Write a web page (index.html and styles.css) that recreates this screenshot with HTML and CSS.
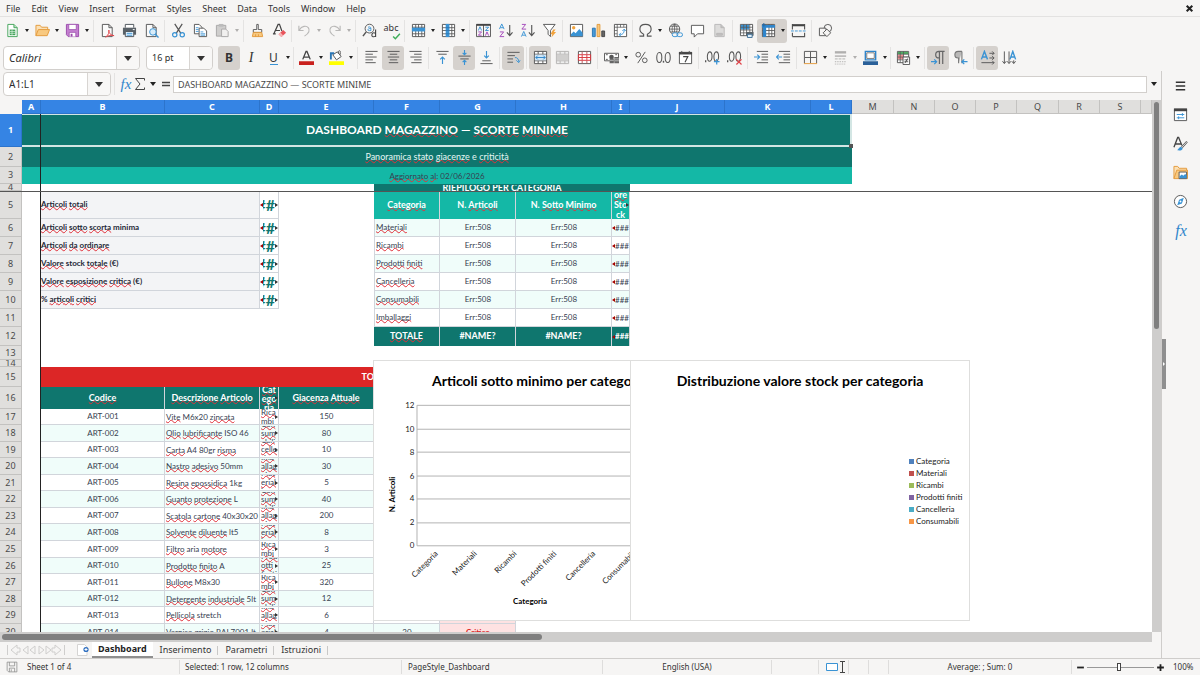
FILE: index.html
```html
<!DOCTYPE html>
<html lang="en">
<head>
<meta charset="utf-8">
<title>Dashboard</title>
<link rel="stylesheet" href="styles.css">
</head>
<body>
<header class="menubar">
  <nav class="menus">
    <a href="#">File</a><a href="#">Edit</a><a href="#">View</a><a href="#">Insert</a><a href="#">Format</a><a href="#">Styles</a><a href="#">Sheet</a><a href="#">Data</a><a href="#">Tools</a><a href="#">Window</a><a href="#">Help</a>
  </nav>
  <button class="close" aria-label="Close document"><svg viewBox="0 0 8 8"><path d="M1.5 1.5l5 5M6.5 1.5l-5 5" stroke="#222" stroke-width="1.8"/></svg></button>
</header>

<div class="toolbar" role="toolbar" aria-label="Standard">
  <button class="tb drop" aria-label="New"><svg viewBox="0 0 16 16"><path d="M3 1.5h6.500l3.500 3.500v9.500H3z" fill="#fff" stroke="#43a35a"/><path d="M9.500 1.500V5H13" fill="#b7e3c0" stroke="#43a35a"/><path d="M5 7h6v6H5z" fill="#43a35a"/><path d="M5 9h6M5 11h6M7.500 7v6" stroke="#e5f6e8" stroke-width=".7"/></svg><i></i></button>
  <button class="tb drop" aria-label="Open"><svg viewBox="0 0 16 16"><path d="M1 13.500V2.500h4.500l1.500 2h6.500V7" fill="#fbe0b5" stroke="#e39a3b"/><path d="M1 13.500L3.500 7h12l-2.500 6.500z" fill="#f8c980" stroke="#e39a3b"/></svg><i></i></button>
  <button class="tb drop" aria-label="Save"><svg viewBox="0 0 16 16"><path d="M1.500 1.500h13v13H3.500l-2-2z" fill="#c47fd0" stroke="#9a4bab"/><path d="M4 1.500h8v5.500H4z" fill="#fff" stroke="#9a4bab" stroke-width=".8"/><path d="M4.500 14.500v-4.500h7v4.500" fill="#fff" stroke="#9a4bab" stroke-width=".8"/><path d="M6 11.500h2v3H6z" fill="#9a4bab"/></svg><i></i></button>
  <span class="sep"></span>
  <button class="tb" aria-label="Export PDF"><svg viewBox="0 0 16 16"><path d="M2.500 1.500h7l3.500 3.500v9.500H2.500z" fill="#fafafa" stroke="#555"/><path d="M9.500 1.500V5H13" fill="none" stroke="#555"/><path d="M6 15c3-2 4-5 3.500-7.500-.8 3 2 5.500 5.500 6-3-.8-6-.2-9 1.500z" fill="#fff" stroke="#e0444a"/></svg></button>
  <button class="tb" aria-label="Print"><svg viewBox="0 0 16 16"><path d="M3.500 5V1.500h9V5" fill="#fff" stroke="#4a5157"/><path d="M1 5h14v7.500H1z" fill="#5a6268"/><path d="M3.500 9h9v5.500h-9z" fill="#eaf4fb" stroke="#4a5157"/><path d="M5 11h6M5 13h6" stroke="#3a93d4"/><path d="M11.500 7h2" stroke="#fff"/></svg></button>
  <button class="tb" aria-label="Print preview"><svg viewBox="0 0 16 16"><path d="M2.500 1.500h7l3.500 3.500v9.500H2.500z" fill="#fafafa" stroke="#555"/><path d="M9.500 1.500V5H13" fill="none" stroke="#555"/><circle cx="9.500" cy="9.500" r="3.500" fill="#d8ecf9" stroke="#3a93d4"/><path d="M12 12l3.500 3.500" stroke="#3a93d4" stroke-width="1.500"/></svg></button>
  <span class="sep"></span>
  <button class="tb" aria-label="Cut"><svg viewBox="0 0 16 16" fill="none"><path d="M4 1l6.500 10M12 1L5.500 11" stroke="#555" stroke-width="1.300"/><circle cx="4" cy="12.500" r="2.300" stroke="#3a93d4" stroke-width="1.300"/><circle cx="12" cy="12.500" r="2.300" stroke="#3a93d4" stroke-width="1.300"/></svg></button>
  <button class="tb" aria-label="Copy"><svg viewBox="0 0 16 16"><path d="M1.500 1.500h5l3 3v7h-8z" fill="#fff" stroke="#555"/><path d="M6.500 5.500h5l3 3v6h-8z" fill="#fff" stroke="#555"/><path d="M3 5h3M3 7h3M3 9h3M8 9.500h3M8 11.500h5M8 13h5" stroke="#3a93d4" stroke-width=".9"/></svg></button>
  <button class="tb drop off" aria-label="Paste"><svg viewBox="0 0 16 16"><path d="M1.500 2.500h10v11.500h-10z" fill="#cfcecd" stroke="#a9a8a7"/><path d="M4 1h5v3H4z" fill="#bbb"/><path d="M7 6.500h4.500l2.500 2.500v5.500H7z" fill="#f1f0ef" stroke="#a9a8a7"/></svg><i></i></button>
  <span class="sep"></span>
  <button class="tb" aria-label="Clone formatting"><svg viewBox="0 0 16 16"><path d="M7.200 1.500h1.600V7h3.700v3h-9V7h3.700z" fill="#fff" stroke="#555"/><path d="M3.500 10h9l1 4.500h-11z" fill="#f8c980" stroke="#e39a3b"/><path d="M6 12v2.500M9 12v2.500" stroke="#e39a3b"/></svg></button>
  <button class="tb" aria-label="Clear formatting"><svg viewBox="0 0 16 16"><path d="M2 11.500L6.500 1.500h1.500l2.500 7M3.500 8h5M1 11.500h3" fill="none" stroke="#444" stroke-width="1.300"/><path d="M7 12l5-4.500 3 3-5 4.500z" fill="#e8545b"/><path d="M7 12l2-1.800 3 3L10 15z" fill="#f6b2b5"/></svg></button>
  <span class="sep slim"></span>
  <button class="tb drop off" aria-label="Undo"><svg viewBox="0 0 16 16" fill="none" stroke="#b9b8b7" stroke-width="1.200"><path d="M2 3v5h5M2.500 7.500C5 3 10 2.500 12 5s1 6-4 9"/></svg><i></i></button>
  <button class="tb drop off" aria-label="Redo"><svg viewBox="0 0 16 16" fill="none" stroke="#b9b8b7" stroke-width="1.200"><path d="M14 3v5H9M13.500 7.500C11 3 6 2.500 4 5s-1 6 4 9"/></svg><i></i></button>
  <span class="sep"></span>
  <button class="tb" aria-label="Find and replace"><svg viewBox="0 0 16 16" fill="none"><circle cx="8" cy="6" r="4.700" stroke="#555"/><path d="M4.500 9.500L1 14" stroke="#555" stroke-width="1.600"/><path d="M6.500 4.500c3-1 3 .5 3 3.500-3 .5-3.500-.2-3-1.200s2-1 3-.8" stroke="#3a93d4"/><path d="M14.500 7v8M14.500 11c-3-1.500-4 .2-4 2s2 2.200 4 1" stroke="#444" stroke-width="1.200"/></svg></button>
  <button class="tb" aria-label="Spelling"><span class="abc">abc</span><svg class="tick" viewBox="0 0 8 6"><path d="M1 3l2 2 4-4.500" fill="none" stroke="#3fae5a" stroke-width="1.300"/></svg></button>
  <span class="sep"></span>
  <button class="tb drop" aria-label="Row"><svg viewBox="0 0 16 16"><path d="M1.500 1.500h13v13h-13z" fill="#fff" stroke="#555"/><path d="M1.500 4.500h13M1.500 11.500h13M5 1.500v13M8 1.500v13M11.500 1.500v13" stroke="#555" stroke-width=".9"/><path d="M1 5h14v4H1z" fill="#3a93d4"/></svg><i></i></button>
  <button class="tb drop" aria-label="Column"><svg viewBox="0 0 16 16"><path d="M1.500 1.500h13v13h-13z" fill="#fff" stroke="#555"/><path d="M1.500 5h13M1.500 8h13M1.500 11.500h13M11.500 1.500v13" stroke="#555" stroke-width=".9"/><path d="M5 1h4v14H5z" fill="#3a93d4"/><path d="M5 5h4M5 8h4M5 11.500h4" stroke="#2a6ca8" stroke-width=".7"/></svg><i></i></button>
  <span class="sep"></span>
  <button class="tb" aria-label="Sort"><svg viewBox="0 0 16 16" fill="none"><path d="M.5 1.500h15v13H.5zM8 2v13" stroke="#555"/><path d="M.5 2h15" stroke="#444" stroke-width="2"/><path d="M2.500 8l1.700-4L6 8M10 4.500h3.500L10 8h3.500" stroke="#3a93d4"/><path d="M2.500 9.500H6L2.500 13H6M10 13.500l1.700-4 1.800 4" stroke="#a347ba"/></svg></button>
  <button class="tb" aria-label="Sort ascending"><svg viewBox="0 0 16 16" fill="none"><path d="M1.500 6.500L4 1l2.500 5.500M2.500 5h3" stroke="#3a93d4"/><path d="M2 9.500h4L2 14.500h4.500" stroke="#a347ba"/><path d="M12.500 2v11M9.500 10l3 3.500 3-3.500" stroke="#555" stroke-width="1.200"/></svg></button>
  <button class="tb" aria-label="Sort descending"><svg viewBox="0 0 16 16" fill="none"><path d="M2 1.500h4L2 6.500h4.500" stroke="#a347ba"/><path d="M1.500 14.500L4 9l2.500 5.500M2.500 13h3" stroke="#3a93d4"/><path d="M12.500 2v11M9.500 10l3 3.500 3-3.500" stroke="#555" stroke-width="1.200"/></svg></button>
  <button class="tb" aria-label="AutoFilter"><svg viewBox="0 0 16 16"><path d="M1.500 1.500h12.500L9 8v6.500L6.500 12V8z" fill="#fff" stroke="#555"/><path d="M12 7l-3 5h2l-1 3.500 5-6h-2.500l2-2.500z" fill="#f2a33c"/></svg></button>
  <span class="sep"></span>
  <button class="tb" aria-label="Insert image"><svg viewBox="0 0 16 16"><path d="M1.500 1.500h13v13h-13z" fill="#fff" stroke="#555"/><circle cx="5" cy="5" r="1.800" fill="#f2a33c"/><path d="M2 14v-2l3-3 2 2 4-4.500 3.500 4V14z" fill="#3a93d4"/></svg></button>
  <button class="tb" aria-label="Insert chart"><svg viewBox="0 0 16 16"><path d="M1.500 5.500h3v9h-3z" fill="#4a9bd8" stroke="#2a76b5"/><path d="M6.500 1.500h3v13h-3z" fill="#f8c980" stroke="#e39a3b"/><path d="M11.500 8.500h3v6h-3z" fill="#666" stroke="#444"/></svg></button>
  <button class="tb" aria-label="Pivot table"><svg viewBox="0 0 16 16"><path d="M1.500 1.500h13v13h-13z" fill="#fff" stroke="#555"/><path d="M1.500 4.500h13M4.500 1.500v13M8 1.500v3M11.500 1.500v3M1.500 8h3M1.500 11.500h3" stroke="#555" stroke-width=".8"/><path d="M7 12.500c3 0 5-1.500 5-5.500M6.500 12.500l2-2M6.500 12.500l2 1.500M12 6.500l-2 2M12 6.500l1.500 2" fill="none" stroke="#3a93d4"/></svg></button>
  <span class="sep slim"></span>
  <button class="tb drop" aria-label="Special character"><svg viewBox="0 0 16 16" fill="none" stroke="#555" stroke-width="1.200"><path d="M1.500 14H6v-2C3 10.500 2 8.500 2 6.500 2 3.500 4.500 1.500 8 1.500s6 2 6 5c0 2-1 4-4 5.500v2h4.500"/></svg><i></i></button>
  <button class="tb" aria-label="Hyperlink"><svg viewBox="0 0 16 16" fill="none"><circle cx="7" cy="6.500" r="5.500" stroke="#555"/><path d="M1.500 6.500h11M7 1v11M7 1C3.500 4 3.500 9 7 12M7 1c3.500 3 3.500 8 0 11M2.500 3.500h9M2.500 9.500h9" stroke="#555" stroke-width=".8"/><rect x="4.500" y="10.500" width="6" height="4" rx="2" fill="#f6f5f4" stroke="#3a93d4"/><rect x="9.500" y="10.500" width="6" height="4" rx="2" stroke="#3a93d4"/></svg></button>
  <button class="tb" aria-label="Comment"><svg viewBox="0 0 16 16"><path d="M1.500 2.500h13v9H8L4.500 15v-3.500h-3z" fill="#fff" stroke="#555"/></svg></button>
  <button class="tb off" aria-label="Headers and footers"><svg viewBox="0 0 16 16"><path d="M3 1.500h6.500L13 5v9.500H3z" fill="#dddcdb" stroke="#b9b8b7"/><path d="M9.500 1.500V5H13M5 11h6v2H5z" fill="#c3c2c1" stroke="#b9b8b7"/></svg></button>
  <span class="sep"></span>
  <button class="tb" aria-label="Print area"><svg viewBox="0 0 16 16"><path d="M1.500 1.500h13v12h-13z" fill="#fff" stroke="#555"/><path d="M2 2h9v5H2z" fill="#3a93d4"/><path d="M1.500 4.500h13M1.500 7.500h13M1.500 10.500h13M5 1.500v12M8 1.500v12M11.500 1.500v12" stroke="#555" stroke-width=".8"/><path d="M7.500 9.500h8v4h-8z" fill="#5a6268"/><path d="M9 12h5v3.500H9z" fill="#dceefa" stroke="#3f6f96"/></svg></button>
  <button class="tb drop on" aria-label="Freeze panes"><svg viewBox="0 0 16 16"><path d="M1.500 1.500h13v13h-13z" fill="#fff" stroke="#555"/><path d="M1.500 8h13M1.500 11.500h13M8.500 1.500v13M11.500 1.500v13" stroke="#555" stroke-width=".9"/><path d="M1 2h14v3H1zM2 2h3.500v13H2z" fill="#2f85cb"/><path d="M3 0v4M1 2h4" stroke="#2467a3"/></svg><i></i></button>
  <button class="tb" aria-label="Split window"><svg viewBox="0 0 16 16"><path d="M2 2h12M1.500 14.500h13v-4M1.500 14.500v-4M1.500 1v6M14.500 1v6" fill="none" stroke="#555" stroke-width="1.200"/><path d="M1.500 2.500h13" stroke="#444" stroke-width="2"/><path d="M0 8.500h16" stroke="#3a93d4" stroke-dasharray="3 1.200"/></svg></button>
  <span class="sep"></span>
  <button class="tb" aria-label="Draw functions"><svg viewBox="0 0 16 16" fill="#f6f5f4" stroke="#555"><circle cx="10.500" cy="5.500" r="4"/><path d="M1.500 5.500h7v8h-7z"/><path d="M9.500 6.500l4 4-4 4-4-4z"/></svg></button>
</div>

<div class="toolbar" role="toolbar" aria-label="Formatting">
  <span class="combo font"><select aria-label="Font name"><option>Calibri</option></select></span>
  <span class="combo size"><select aria-label="Font size"><option>16 pt</option></select></span>
  <button class="tb on bold" aria-label="Bold">B</button>
  <button class="tb ital" aria-label="Italic">I</button>
  <button class="tb drop" aria-label="Underline"><span class="und">U</span><i></i></button>
  <span class="sep slim"></span>
  <button class="tb drop" aria-label="Font color"><svg viewBox="0 0 16 16"><path d="M4 10L7.500 1.500h1L12 10M5.200 7.500h5.600" fill="none" stroke="#444" stroke-width="1.400"/><path d="M0 12h16v4H0z" fill="#c9211e"/></svg><i></i></button>
  <button class="tb drop" aria-label="Highlighting"><svg viewBox="0 0 16 16"><path d="M4 5l5-3 4 5-5 3.500z" fill="#fff" stroke="#555"/><path d="M10 4V1.500c1-1.500 2.500-.5 2 1L12 5" fill="none" stroke="#555"/><path d="M2 10V3.500h3.500" fill="none" stroke="#2a76b5" stroke-width="2"/><path d="M0 12h16v4H0z" fill="#ff0"/></svg><i></i></button>
  <span class="sep"></span>
  <button class="tb" aria-label="Align left"><svg viewBox="0 0 16 16"><path d="M1.500 1.500h13M1.500 4.500h8M1.500 7.500h12M1.500 10.500h8M1.500 13.500h11" stroke="#555"/></svg></button>
  <button class="tb on" aria-label="Center"><svg viewBox="0 0 16 16"><path d="M1.500 1.500h13M4 4.500h8M2 7.500h12M4 10.500h8M3 13.500h10" stroke="#555"/></svg></button>
  <button class="tb" aria-label="Align right"><svg viewBox="0 0 16 16"><path d="M1.500 1.500h13M6.500 4.500h8M2.500 7.500h12M6.500 10.500h8M3.500 13.500h11" stroke="#555"/></svg></button>
  <span class="sep"></span>
  <button class="tb" aria-label="Align top"><svg viewBox="0 0 16 16" fill="none"><path d="M1.500 1.500h13M3.500 4.500h9" stroke="#555"/><path d="M8 15V7.500M5.500 10L8 7.500l2.500 2.500" stroke="#3a93d4" stroke-width="1.200"/></svg></button>
  <button class="tb on" aria-label="Center vertically"><svg viewBox="0 0 16 16" fill="none"><path d="M1.500 6.500h13M3.500 9.500h9" stroke="#555"/><path d="M8 0v5M6 3l2 2 2-2M8 16v-5M6 13l2-2 2 2" stroke="#3a93d4" stroke-width="1.200"/></svg></button>
  <button class="tb" aria-label="Align bottom"><svg viewBox="0 0 16 16" fill="none"><path d="M1.500 14.500h13M3.500 11.500h9" stroke="#555"/><path d="M8 1v7.500M5.500 6L8 8.500 10.500 6" stroke="#3a93d4" stroke-width="1.200"/></svg></button>
  <span class="sep"></span>
  <button class="tb on" aria-label="Wrap text"><svg viewBox="0 0 16 16" fill="none"><path d="M1.500 2.500h13M1.500 6h8M1.500 9.500h6M1.500 13h6" stroke="#555"/><path d="M9.500 8c3 0 4 2 4 4.500M11 11l2.500 2.500L15 11" stroke="#3a93d4"/></svg></button>
  <span class="sep"></span>
  <button class="tb on" aria-label="Merge cells"><svg viewBox="0 0 16 16"><path d="M1.500 1.500h13v13h-13z" fill="#fff" stroke="#555"/><path d="M1.500 4.500h13M1.500 11.500h13M5.500 1.500v3M10.500 1.500v3M5.500 11.500v3M10.500 11.500v3" stroke="#555"/><path d="M2 5h12v6H2z" fill="#cfe6f7"/><path d="M3 8h10M5 6L3 8l2 2M11 6l2 2-2 2" fill="none" stroke="#2f85cb"/></svg></button>
  <button class="tb off" aria-label="Unmerge cells"><svg viewBox="0 0 16 16"><path d="M1.500 1.500h13v13h-13z" fill="#eee" stroke="#b5b4b3"/><path d="M1.500 4.500h13M1.500 11.500h13M5.500 1.500v3M10.500 1.500v3M5.500 11.500v3M10.500 11.500v3" stroke="#b5b4b3"/><path d="M2 5h12v6H2z" fill="#d0cfce"/></svg></button>
  <button class="tb" aria-label="Delete cells"><svg viewBox="0 0 16 16"><path d="M1.500 1.500h13v13h-13z" fill="#fff" stroke="#555"/><path d="M1.500 5h13v6h-13zM1.500 8h13M5.500 5v6M10.500 5v6" fill="none" stroke="#d9363e"/><path d="M5.500 1.500v3M10.500 1.500v3M5.500 11.500v3M10.500 11.500v3" stroke="#b5555a"/></svg></button>
  <span class="sep"></span>
  <button class="tb drop" aria-label="Currency"><svg viewBox="0 0 16 16"><path d="M.5 3.500h15v8H.5z" fill="#fff" stroke="#555"/><path d="M2 5h2M12 5h2M2 10h2" stroke="#555"/><circle cx="8" cy="7.500" r="2.500" fill="#555"/><path d="M6 9h4.500v5H6zM11 7.500h5v6.500h-5z" fill="#666"/><path d="M6 11h4.500M11 9.500h5M11 11.500h5" stroke="#ddd" stroke-width=".7"/></svg><i></i></button>
  <button class="tb" aria-label="Percent"><svg viewBox="0 0 16 16" fill="none" stroke="#555"><circle cx="4.500" cy="5" r="2.500"/><circle cx="11.500" cy="11" r="2.500"/><path d="M12 2L4 14"/></svg></button>
  <button class="tb" aria-label="Number"><svg viewBox="0 0 16 16" fill="none" stroke="#555" stroke-width="1.100"><ellipse cx="3.500" cy="8" rx="2.700" ry="5.300"/><ellipse cx="12.500" cy="8" rx="2.700" ry="5.300"/><path d="M8 11.500v2" stroke-width="1.500"/></svg></button>
  <button class="tb" aria-label="Date"><svg viewBox="0 0 16 16"><path d="M1.500 2.500h13v12h-13z" fill="#fff" stroke="#555"/><path d="M1 3.500h14" stroke="#444" stroke-width="2.500"/><path d="M4 1v3M12 1v3" stroke="#555"/><path d="M5.500 7h5L7.500 13" fill="none" stroke="#444" stroke-width="1.200"/></svg></button>
  <span class="sep"></span>
  <button class="tb" aria-label="Add decimal place"><svg viewBox="0 0 16 16" fill="none" stroke="#555" stroke-width="1.100"><ellipse cx="5" cy="7" rx="2.500" ry="5"/><ellipse cx="12" cy="7" rx="2.500" ry="5"/><path d="M.7 11v2" stroke-width="1.400"/><path d="M12.500 9.500v6M9.500 12.500h6" stroke="#3a93d4" stroke-width="1.300"/></svg></button>
  <button class="tb" aria-label="Delete decimal place"><svg viewBox="0 0 16 16" fill="none" stroke="#555" stroke-width="1.100"><ellipse cx="5" cy="7" rx="2.500" ry="5"/><ellipse cx="12" cy="7" rx="2.500" ry="5"/><path d="M.7 11v2" stroke-width="1.400"/><path d="M10 10l5.500 5.500M15.500 10L10 15.500" stroke="#e0444a" stroke-width="1.300"/></svg></button>
  <span class="sep"></span>
  <button class="tb" aria-label="Increase indent"><svg viewBox="0 0 16 16" fill="none"><path d="M3 1.500h12M8 4.500h7M8 7.500h7M8 10.500h7M3 13.500h12" stroke="#555"/><path d="M0 7.500h6M3.500 5L6 7.500 3.500 10" stroke="#3a93d4" stroke-width="1.200"/></svg></button>
  <button class="tb" aria-label="Decrease indent"><svg viewBox="0 0 16 16" fill="none"><path d="M3 1.500h12M8 4.500h7M8 7.500h7M8 10.500h7M3 13.500h12" stroke="#555"/><path d="M6.500 7.500h-6M3 5L.5 7.500 3 10" stroke="#3a93d4" stroke-width="1.200"/></svg></button>
  <span class="sep"></span>
  <button class="tb drop" aria-label="Borders"><svg viewBox="0 0 16 16" fill="none"><path d="M1.500 14V1.500h13V14M8 2v12M2 8h12" stroke="#555"/><path d="M1 14.500h14" stroke="#e39a3b"/></svg><i></i></button>
  <button class="tb drop off" aria-label="Border style"><svg viewBox="0 0 16 16" stroke="#b0afae"><path d="M2 2.500h12" stroke-width="2.500"/><path d="M2 6.500h12" stroke-width="1.500"/><path d="M2 9.500h12" stroke-dasharray="3 1"/><path d="M2 12.500h12" stroke-dasharray="1.500 1"/><path d="M2 15h12" stroke-dasharray="1 1"/></svg><i></i></button>
  <button class="tb drop" aria-label="Border color"><svg viewBox="0 0 16 16"><path d="M2.500 1.500h11v9h-11z" fill="#fff" stroke="#2f85cb" stroke-width="1.500"/><path d="M4 3h8v6H4z" fill="none" stroke="#777"/><path d="M0 12h16v4H0z" fill="#2a6099"/></svg><i></i></button>
  <span class="sep slim"></span>
  <button class="tb drop" aria-label="Conditional formatting"><svg viewBox="0 0 16 16"><path d="M1.500 1.500h12v12h-12z" fill="#fff" stroke="#555"/><path d="M2 2h11v2.500H2z" fill="#4fae63"/><path d="M2 5h6v5H2z" fill="#ef8d91"/><path d="M1.500 4.500h12M1.500 7.500h12M1.500 10.500h12M4.500 1.500v12M8 1.500v12" stroke="#555" stroke-width=".8"/><path d="M7.500 7.500h7v8h-7z" fill="#fff" stroke="#555"/><path d="M9 10.500h4M9 12.500h4M12.500 9l-3 5" stroke="#444" stroke-width=".9"/></svg><i></i></button>
  <span class="sep"></span>
  <button class="tb on" aria-label="Left to right"><svg viewBox="0 0 16 16"><path d="M14.500 1.500H8.500a3.500 3.500 0 000 7H9V15M9 1.500V15M12.500 1.500V15" fill="none" stroke="#666" stroke-width="1.300"/><path d="M0 12.500h6M3.500 10L6 12.500 3.500 15" fill="none" stroke="#3a93d4" stroke-width="1.300"/></svg></button>
  <button class="tb" aria-label="Right to left"><svg viewBox="0 0 16 16"><path d="M9.500 1.500h-4a3.500 3.500 0 000 7H6V14M9.500 1.500V14" fill="#b9b8b7" stroke="#777" stroke-width="1.200"/><path d="M15.500 12.500h-6M12 10l-2.500 2.500L12 15" fill="none" stroke="#3a93d4" stroke-width="1.300"/></svg></button>
  <span class="sep"></span>
  <button class="tb on" aria-label="Horizontal text"><svg viewBox="0 0 16 16" fill="none"><path d="M1.500 10L4.700 1.500 8 10M2.700 7.500h4" stroke="#3a93d4" stroke-width="1.500"/><path d="M10 3.500h5M10 8.500h5M1.500 13.500h13.500M13 1.500l2 2-2 2M13 6.500l2 2-2 2M13 11.500l2 2-2 2" stroke="#555"/></svg></button>
  <button class="tb" aria-label="Vertical text"><svg viewBox="0 0 16 16" fill="none"><path d="M8.500 10L11.500 1.500l3 8.500M9.500 7.500h4" stroke="#3a93d4" stroke-width="1.500"/><path d="M2.500 1.500V14M7.500 1.500V14M12.500 11v3M.5 12l2 2.500 2-2.500M5.500 12l2 2.500 2-2.500M10.500 12l2 2.500 2-2.500" stroke="#555"/></svg></button>
</div>

<main class="workspace">
  <div class="document">
    <div class="formulabar">
      <span class="combo name"><select aria-label="Name box"><option>A1:L1</option></select></span>
      <span class="sep"></span>
      <button class="fx" aria-label="Function wizard">fx</button>
      <button class="sigma" aria-label="Select function"><svg viewBox="0 0 12 14"><path d="M10.500 3.500v-2h-9L6 7l-4.500 5.500h9v-2" fill="none" stroke="#444"/></svg><i></i></button>
      <button class="equals" aria-label="Formula"><svg viewBox="0 0 10 8"><path d="M1 2.500h8M1 5.500h8" stroke="#444" stroke-width="1.500"/></svg></button>
      <input type="text" aria-label="Input line" value="DASHBOARD MAGAZZINO — SCORTE MINIME">
      <button class="expand" aria-label="Expand formula bar"><i></i></button>
    </div>

    <div class="sheetarea">
      <div class="viewport">
        <table class="grid">
          <colgroup>
            <col class="w22"><col class="w19"><col class="w124"><col class="w95"><col class="w19"><col class="w95"><col class="w66"><col class="w76"><col class="w96"><col class="w18"><col class="w95"><col class="w86"><col class="w41"><col class="w42"><col class="w41"><col class="w41"><col class="w41"><col class="w42"><col class="w41"><col class="w41"><col>
          </colgroup>
          <thead>
            <tr class="cols"><th class="corner"></th><th class="sel">A</th><th class="sel">B</th><th class="sel">C</th><th class="sel">D</th><th class="sel">E</th><th class="sel">F</th><th class="sel">G</th><th class="sel">H</th><th class="sel">I</th><th class="sel">J</th><th class="sel">K</th><th class="sel">L</th><th>M</th><th>N</th><th>O</th><th>P</th><th>Q</th><th>R</th><th>S</th><th></th></tr>
          </thead>
          <tbody>
            <tr class="h33"><th class="sel">1</th><td colspan="12" class="title">DASHBOARD <u>MAGAZZINO</u> — <u>SCORTE</u> <u>MINIME</u></td><td colspan="8"></td></tr>
            <tr class="h20"><th>2</th><td colspan="12" class="subtitle"><u>Panoramica</u> <u>stato</u> <u>giacenze</u> e <u>criticità</u></td><td colspan="8"></td></tr>
            <tr class="h17"><th>3</th><td colspan="12" class="updated"><u>Aggiornato</u> <u>al</u>: 02/06/2026</td><td colspan="8"></td></tr>
            <tr class="h7"><th><div class="cut">4</div></th><td colspan="5"></td><td colspan="4" class="section"><div class="cut">RIEPILOGO PER CATEGORIA</div></td><td colspan="11"></td></tr>
            <tr class="h28"><th>5</th><td></td><td colspan="2" class="kpi"><u>Articoli</u> <u>totali</u></td><td class="hash"><div><b>##</b></div></td><td></td><td class="head"><u>Categoria</u></td><td class="head">N. <u>Articoli</u></td><td class="head">N. <u>Sotto</u> <u>Minimo</u></td><td class="head more"><div class="stack tall"><span><u>ore</u></span><span>Sto</span><span>ck</span></div></td><td colspan="11"></td></tr>
            <tr class="h18 tint"><th>6</th><td></td><td colspan="2" class="kpi"><u>Articoli</u> <u>sotto</u> <u>scorta</u> minima</td><td class="hash"><div><b>##</b></div></td><td></td><td class="c edge"><u>Materiali</u></td><td class="c mid">Err:508</td><td class="c mid">Err:508</td><td class="c over">###</td><td colspan="11"></td></tr>
            <tr class="h18"><th>7</th><td></td><td colspan="2" class="kpi"><u>Articoli</u> <u>da</u> <u>ordinare</u></td><td class="hash"><div><b>##</b></div></td><td></td><td class="c edge"><u>Ricambi</u></td><td class="c mid">Err:508</td><td class="c mid">Err:508</td><td class="c over">###</td><td colspan="11"></td></tr>
            <tr class="h18 tint"><th>8</th><td></td><td colspan="2" class="kpi"><u>Valore</u> stock <u>totale</u> (€)</td><td class="hash"><div><b>##</b></div></td><td></td><td class="c edge"><u>Prodotti</u> <u>finiti</u></td><td class="c mid">Err:508</td><td class="c mid">Err:508</td><td class="c over">###</td><td colspan="11"></td></tr>
            <tr class="h18"><th>9</th><td></td><td colspan="2" class="kpi"><u>Valore</u> <u>esposizione</u> <u>critica</u> (€)</td><td class="hash"><div><b>##</b></div></td><td></td><td class="c edge"><u>Cancelleria</u></td><td class="c mid">Err:508</td><td class="c mid">Err:508</td><td class="c over">###</td><td colspan="11"></td></tr>
            <tr class="h18 tint"><th>10</th><td></td><td colspan="2" class="kpi">% <u>articoli</u> <u>critici</u></td><td class="hash"><div><b>##</b></div></td><td></td><td class="c edge"><u>Consumabili</u></td><td class="c mid">Err:508</td><td class="c mid">Err:508</td><td class="c over">###</td><td colspan="11"></td></tr>
            <tr class="h18"><th>11</th><td colspan="5"></td><td class="c edge"><u>Imballaggi</u></td><td class="c mid">Err:508</td><td class="c mid">Err:508</td><td class="c over">###</td><td colspan="11"></td></tr>
            <tr class="h19"><th>12</th><td colspan="5"></td><td class="total"><u>TOTALE</u></td><td class="total">#NAME?</td><td class="total">#NAME?</td><td class="total over">###</td><td colspan="11"></td></tr>
            <tr class="h14"><th>13</th><td colspan="20"></td></tr>
            <tr class="h7"><th><div class="cut">14</div></th><td colspan="20"></td></tr>
            <tr class="h20"><th>15</th><td></td><td colspan="4" class="alert">TO</td><td colspan="15"></td></tr>
            <tr class="h22"><th>16</th><td></td><td class="total"><u>Codice</u></td><td class="total"><u>Descrizione</u> <u>Articolo</u></td><td class="total more"><div class="stack mid22"><span><u>Cat</u></span><span><u>ego</u></span><span><u>ria</u></span></div></td><td class="total"><u>Giacenza</u> <u>Attuale</u></td><td colspan="15"></td></tr>
            <tr class="h16"><th>17</th><td></td><td class="c mid">ART-001</td><td class="c"><u>Vite</u> M6x20 <u>zincata</u></td><td class="c more"><div class="stack"><span><u>Rica</u></span><span><u>mbi</u></span></div></td><td class="c mid">150</td><td colspan="15"></td></tr>
            <tr class="h17 tint"><th>18</th><td></td><td class="c mid">ART-002</td><td class="c"><u>Olio</u> <u>lubrificante</u> ISO 46</td><td class="c more"><div class="stack"><span><u>Con</u></span><span><u>sum</u></span><span><u>abili</u></span></div></td><td class="c mid">80</td><td colspan="15"></td></tr>
            <tr class="h16"><th>19</th><td></td><td class="c mid">ART-003</td><td class="c"><u>Carta</u> A4 80gr <u>risma</u></td><td class="c more"><div class="stack"><span><u>Can</u></span><span><u>celle</u></span><span><u>ria</u></span></div></td><td class="c mid">10</td><td colspan="15"></td></tr>
            <tr class="h17 tint"><th>20</th><td></td><td class="c mid">ART-004</td><td class="c"><u>Nastro</u> <u>adesivo</u> 50mm</td><td class="c more"><div class="stack"><span><u>Imb</u></span><span><u>allag</u></span><span><u>gi</u></span></div></td><td class="c mid">30</td><td colspan="15"></td></tr>
            <tr class="h16"><th>21</th><td></td><td class="c mid">ART-005</td><td class="c"><u>Resina</u> <u>epossidica</u> 1kg</td><td class="c more"><div class="stack"><span><u>Mat</u></span><span><u>erial</u></span><span><u>i</u></span></div></td><td class="c mid">5</td><td colspan="15"></td></tr>
            <tr class="h17 tint"><th>22</th><td></td><td class="c mid">ART-006</td><td class="c"><u>Guanto</u> <u>protezione</u> L</td><td class="c more"><div class="stack"><span><u>Con</u></span><span><u>sum</u></span><span><u>abili</u></span></div></td><td class="c mid">40</td><td colspan="15"></td></tr>
            <tr class="h16"><th>23</th><td></td><td class="c mid">ART-007</td><td class="c"><u>Scatola</u> <u>cartone</u> 40x30x20</td><td class="c more"><div class="stack"><span><u>Imb</u></span><span><u>allag</u></span><span><u>gi</u></span></div></td><td class="c mid">200</td><td colspan="15"></td></tr>
            <tr class="h17 tint"><th>24</th><td></td><td class="c mid">ART-008</td><td class="c"><u>Solvente</u> <u>diluente</u> lt5</td><td class="c more"><div class="stack"><span><u>Mat</u></span><span><u>erial</u></span><span><u>i</u></span></div></td><td class="c mid">8</td><td colspan="15"></td></tr>
            <tr class="h17"><th>25</th><td></td><td class="c mid">ART-009</td><td class="c"><u>Filtro</u> aria <u>motore</u></td><td class="c more"><div class="stack"><span><u>Rica</u></span><span><u>mbi</u></span></div></td><td class="c mid">3</td><td colspan="15"></td></tr>
            <tr class="h16 tint"><th>26</th><td></td><td class="c mid">ART-010</td><td class="c"><u>Prodotto</u> <u>finito</u> A</td><td class="c more"><div class="stack"><span><u>Prod</u></span><span><u>otti</u></span><span><u>finiti</u></span></div></td><td class="c mid">25</td><td colspan="15"></td></tr>
            <tr class="h17"><th>27</th><td></td><td class="c mid">ART-011</td><td class="c"><u>Bullone</u> M8x30</td><td class="c more"><div class="stack"><span><u>Rica</u></span><span><u>mbi</u></span></div></td><td class="c mid">320</td><td colspan="15"></td></tr>
            <tr class="h16 tint"><th>28</th><td></td><td class="c mid">ART-012</td><td class="c"><u>Detergente</u> <u>industriale</u> 5lt</td><td class="c more"><div class="stack"><span><u>Con</u></span><span><u>sum</u></span><span><u>abili</u></span></div></td><td class="c mid">12</td><td colspan="15"></td></tr>
            <tr class="h17"><th>29</th><td></td><td class="c mid">ART-013</td><td class="c"><u>Pellicola</u> stretch</td><td class="c more"><div class="stack"><span><u>Imb</u></span><span><u>allag</u></span><span><u>gi</u></span></div></td><td class="c mid">6</td><td class="c"></td><td class="c critical"></td><td colspan="13"></td></tr>
            <tr class="h17 tint"><th>30</th><td></td><td class="c mid">ART-014</td><td class="c"><u>Vernice</u> <u>grigio</u> RAL7001 lt</td><td class="c more"><div class="stack"><span><u>Mat</u></span><span><u>erial</u></span><span><u>i</u></span></div></td><td class="c mid">4</td><td class="c mid">20</td><td class="c critical"><u>Critico</u></td><td colspan="13"></td></tr>
          </tbody>
        </table>

        <div class="selection"></div>
        <div class="freeze-x"></div>
        <div class="freeze-y"></div>

        <figure class="chart bar">
          <figcaption>Articoli sotto minimo per categoria</figcaption>
          <svg viewBox="0 0 338 260">
            <g stroke="#b3b3b3"><path d="M42.500 44.500H320M42.500 68.500H320M42.500 91.500H320M42.500 115.500H320M42.500 138.500H320M42.500 162.500H320M42.500 185.500H320M42.500 44.500v141"/></g>
            <g class="ticks"><text x="40" y="47">12</text><text x="40" y="71">10</text><text x="40" y="94">8</text><text x="40" y="118">6</text><text x="40" y="141">4</text><text x="40" y="165">2</text><text x="40" y="188">0</text></g>
            <g class="cats"><text transform="translate(64 194) rotate(-45)">Categoria</text><text transform="translate(103 194) rotate(-45)">Materiali</text><text transform="translate(143 194) rotate(-45)">Ricambi</text><text transform="translate(183 194) rotate(-45)">Prodotti finiti</text><text transform="translate(222 194) rotate(-45)">Cancelleria</text><text transform="translate(262 194) rotate(-45)">Consumabili</text></g>
            <text class="axis" x="156" y="244">Categoria</text>
            <text class="axis" transform="translate(20 134) rotate(-90)">N. Articoli</text>
          </svg>
        </figure>
        <figure class="chart pie">
          <figcaption>Distribuzione valore stock per categoria</figcaption>
          <ul>
            <li class="k1">Categoria</li><li class="k2">Materiali</li><li class="k3">Ricambi</li><li class="k4">Prodotti finiti</li><li class="k5">Cancelleria</li><li class="k6">Consumabili</li>
          </ul>
        </figure>
      </div>
      <div class="vscroll"><span></span></div>
    </div>
    <div class="hscroll"><div class="track"><span></span></div></div>

    <div class="tabs">
      <div class="navs">
        <svg viewBox="0 0 60 12" fill="none" stroke="#cfcecd"><path d="M1.500 1v10M11 1L5 6l6 5V8h3V4h-3zM22 2l-5 4 5 4zM29 2l-5 4 5 4zM33 2l5 4-5 4zM40 2l5 4-5 4zM49 1l6 5-6 5V8h-3V4h3zM58.500 1v10"/></svg>
      </div>
      <button class="addtab" aria-label="Add sheet"><svg viewBox="0 0 14 14"><path d="M1.500 1.500h7L11 4v8.500H1.500z" fill="#fff" stroke="#d5d4d3"/><circle cx="10" cy="6.500" r="2.600" fill="#2f6fc0"/><path d="M10 5v3M8.500 6.500h3" stroke="#fff"/></svg></button>
      <button class="tab active">Dashboard</button><button class="tab">Inserimento</button><button class="tab">Parametri</button><button class="tab">Istruzioni</button>
    </div>
  </div>

  <aside class="sidebar">
    <button aria-label="Sidebar settings"><svg viewBox="0 0 16 16"><path d="M3 4.500h10M3 8.500h10M3 12.500h10" stroke="#333" stroke-width="1.500"/></svg></button>
    <button aria-label="Properties"><svg viewBox="0 0 16 16"><path d="M1.500 2.500h13v12h-13z" fill="#fff" stroke="#555"/><path d="M1 3h14" stroke="#444" stroke-width="3"/><path d="M4 8h8M4 11.500h8M10 6.500v3M6 10v3" stroke="#3a93d4"/></svg></button>
    <button aria-label="Styles"><svg viewBox="0 0 16 16"><path d="M1 12L5 1.500h1L9.500 10M2.500 8.500h6" fill="none" stroke="#444" stroke-width="1.400"/><path d="M15 6l-5.500 6" stroke="#555" stroke-width="2.200"/><path d="M15 6l-5.500 6" stroke="#fff" stroke-width=".8"/><path d="M4 15c2 0 2-3 4.500-3.500l2 2C9 16 6 15.500 4 15z" fill="#3a93d4"/></svg></button>
    <button aria-label="Gallery"><svg viewBox="0 0 16 16"><path d="M1 14.500V1.500h4l1.500 2h8V6" fill="#fbe0b5" stroke="#e39a3b"/><path d="M1 14.500L4 5.500h11.500v9z" fill="#f8c980" stroke="#e39a3b"/><path d="M6.500 7.500h8v7h-8z" fill="#fff" stroke="#555"/><path d="M7 14v-2l2.500-2 1.500 1.500 2-2 1.500 1.500V14z" fill="#3a93d4"/></svg></button>
    <button aria-label="Navigator"><svg viewBox="0 0 16 16"><circle cx="8" cy="8" r="6.500" fill="#fff" stroke="#555"/><path d="M11.500 4l-2 6-5 2 2-6z" fill="#3a93d4"/><circle cx="8" cy="8" r="1" fill="#fff"/></svg></button>
    <button class="fx" aria-label="Functions">fx</button>
    <span class="handle"><svg viewBox="0 0 4 6"><path d="M1 1l2 2-2 2z" fill="#fff"/></svg></span>
  </aside>
</main>

<footer class="status">
  <span class="disk"><svg viewBox="0 0 16 16" fill="none" stroke="#888"><path d="M1.500 1.500h13v13H3.500l-2-2zM4.500 1.500v5h7v-5M4.500 14.500v-5h7v5M7 11v3"/></svg></span>
  <span class="cell s1">Sheet 1 of 4</span>
  <span class="cell s2">Selected: 1 row, 12 columns</span>
  <span class="cell s3">PageStyle_Dashboard</span>
  <span class="cell s4">English (USA)</span>
  <span class="cell s5"></span>
  <span class="cell s6"><svg viewBox="0 0 20 12" fill="none"><path d="M1.500 2.500h11v7h-11z" fill="#fff" stroke="#3a93d4"/><path d="M15 .5h5M17.500 .5v11M15 11.500h5" stroke="#444"/></svg></span>
  <span class="cell s7"></span>
  <span class="cell s7"></span>
  <span class="cell s8">Average: ; Sum: 0</span>
  <span class="zoom"><button aria-label="Zoom out"><svg viewBox="0 0 8 8"><path d="M1 4h6" stroke="#222" stroke-width="1.600"/></svg></button><input type="range" min="0" max="100" value="48" aria-label="Zoom"><button aria-label="Zoom in"><svg viewBox="0 0 8 8"><path d="M1 4h6M4 1v6" stroke="#222" stroke-width="1.600"/></svg></button><span class="pct">100%</span></span>
</footer>
</body>
</html>
```

FILE: styles.css
```css
* { box-sizing: border-box; }
body {
  margin: 0; height: 100vh; display: flex; flex-direction: column; overflow: hidden;
  background: #f6f5f4; color: #333; font: 9px/14px "Noto Sans", sans-serif;
}
button { border: 0; padding: 0; background: none; color: inherit; font: inherit; }
button i { width: 0; height: 0; border: 3px solid transparent; border-top: 4px solid #222; border-bottom: 0; }
svg { display: block; flex: none; }

.menubar { display: flex; justify-content: space-between; height: 17px; padding: 0 6px; border-bottom: 1px solid #e3e2e1; }
.menus { display: flex; gap: 11px; }
.menus a { color: inherit; text-decoration: none; line-height: 17px; }
.close { display: flex; align-items: center; }
.close svg { width: 9px; height: 9px; }

.toolbar { display: flex; align-items: center; height: 27px; padding-left: 1px; flex: none; }
.tb { position: relative; display: flex; align-items: center; justify-content: center; width: 22px; height: 24px; border-radius: 3px; flex: none; }
.tb svg { width: 15px; height: 15px; }
.tb.drop { width: 30px; justify-content: flex-start; padding-left: 4px; }
.tb.drop i { margin-left: 5px; border-width: 2px; border-top-width: 3px; border-bottom-width: 0; }
.tb.on { background: #d5d1cd; }
.tb.off i { border-top-color: #b0afae; }
.sep { width: 5px; height: 22px; flex: none; background: linear-gradient(#e4e3e2, #e4e3e2) 2px 0 / 1px 100% no-repeat; }
.sep.slim { width: 3px; background-position: 1px 0; }
.abc { font-size: 9px; line-height: 10px; padding-bottom: 6px; }
.tb svg.tick { position: absolute; right: 1px; bottom: 3px; width: 9px; height: 7px; }
.bold { font-size: 12px; font-weight: 700; }
.ital { font: italic 14px "Liberation Serif", serif; }
.und { width: 15px; text-align: center; font-size: 12px; line-height: 14px; }
.und::after { content: ""; display: block; width: 8px; height: 1px; margin: -1px auto 0; background: #3a93d4; }

.combo { position: relative; flex: none; height: 24px; border: 1px solid #d2cfcc; border-radius: 4px; background: #fff; }
.combo select { appearance: none; width: 100%; height: 100%; border: 0; border-radius: 4px; padding: 0 5px; background: linear-gradient(90deg, #d8d5d2 1px, #f8f7f6 1px) right / 23px 100% no-repeat; color: #2e2e2e; font: inherit; }
.combo::after { content: ""; position: absolute; right: 7px; top: 9px; border: 4px solid transparent; border-top: 5px solid #333; border-bottom: 0; pointer-events: none; }
.font { width: 137px; margin: 0 6px 0 2px; font-size: 11px; font-style: italic; }
.size { width: 67px; margin-right: 5px; font-size: 9px; }
.name { width: 108px; font-size: 10px; }

.workspace { display: flex; flex: 1; min-height: 0; }
.document { display: flex; flex-direction: column; flex: 1; min-width: 0; }
.formulabar { display: flex; align-items: center; height: 29px; padding: 0 0 3px 3px; flex: none; }
.fx { width: 16px; color: #2f85cb; font: italic 15px/20px "Liberation Serif", serif; }
.sigma { display: flex; align-items: center; gap: 4px; width: 25px; }
.sigma svg { width: 12px; height: 14px; }
.formulabar .sep { margin: 0 1px; }
.equals { width: 14px; }
.equals svg { width: 10px; height: 8px; margin: 0 auto; }
.formulabar input { flex: 1; min-width: 0; height: 17px; border: 1px solid #d2cfcc; padding: 0 4px; background: #fff; color: #4a4a4a; font: 9px "Noto Sans", sans-serif; outline: 0; }
.expand { display: flex; width: 14px; justify-content: center; }

.sheetarea { display: flex; flex: 1; min-height: 0; }
.viewport { position: relative; flex: 1; min-width: 0; overflow: hidden; background: #fff; }
.grid { width: 100%; table-layout: fixed; border-collapse: separate; border-spacing: 0; font: 8px/10px Lato, sans-serif; color: #374151; }
.grid th, .grid td { padding: 0; overflow: hidden; white-space: nowrap; }
.grid th { background: #e0dfdd; border-right: 1px solid #c3c2c0; border-bottom: 1px solid #c3c2c0; color: #4a4a4a; font: 9px/12px "Noto Sans", sans-serif; }
.grid .sel { background: #3584e4; border-color: #2c74cc; color: #fff; font-weight: 700; }
.grid th.corner { background: #f6f5f4; border: 0; }
.cols { height: 14px; }
.w18 { width: 18px; } .w19 { width: 19px; } .w22 { width: 22px; } .w41 { width: 41px; } .w42 { width: 42px; }
.w66 { width: 66px; } .w76 { width: 76px; } .w86 { width: 86px; } .w95 { width: 95px; } .w96 { width: 96px; } .w124 { width: 124px; }
.h7 { height: 7px; } .h14 { height: 14px; } .h16 { height: 16px; } .h17 { height: 17px; } .h18 { height: 18px; } .h19 { height: 19px; }
.h20 { height: 20px; } .h22 { height: 22px; } .h28 { height: 28px; } .h33 { height: 33px; }
.cut { height: 6px; line-height: 6px; overflow: hidden; }
u { text-decoration: underline wavy #e0303a 1px; text-underline-offset: -1px; text-decoration-skip-ink: none; }

.grid .title { padding-bottom: 2px; background: #0f766e; color: #fff; font-size: 12px; line-height: 16px; font-weight: 700; text-align: center; }
.subtitle { background: #0f766e; color: #e6f6f4; font-size: 9px; text-align: center; }
.updated { background: #14b8a6; text-align: center; }
.section { background: #0f766e; color: #fff; font-size: 9px; font-weight: 700; text-align: center; }
.head, .total { border-right: 1px solid #d1d5db; background: #14b8a6; color: #fff; font-size: 9px; font-weight: 700; text-align: center; }
.total { background: #0f766e; }
.kpi { background: #f3f4f6; color: #1f2937; font-weight: 700; }
.kpi, .c, .hash { border-right: 1px solid #d1d5db; border-bottom: 1px solid #d1d5db; }
.grid .kpi, .grid .head, .grid .total, .grid .mid, .grid .edge { padding-bottom: 1px; }
.grid .c { padding-left: 1px; }
.edge { border-left: 1px solid #d1d5db; }
.tint .c { background: #f0fdfa; }
.mid { text-align: center; }
.alert { background: #dc2626; color: #fff; font-size: 9px; font-weight: 700; text-align: right; }
.grid .critical { background: #fee2e2; color: #dc2626; font-weight: 700; text-align: center; }
.hash div { display: flex; justify-content: flex-end; width: 12px; height: 15px; margin: 0 auto; overflow: hidden; color: #0f766e; font-size: 16px; line-height: 15px; }
.hash, .more, .over { position: relative; }
.hash::before, .over::before { content: ""; position: absolute; left: 0; top: calc(50% - 2px); border: 2px solid transparent; border-right: 3px solid #a40000; border-left: 0; }
.hash::after, .more::after { content: ""; position: absolute; right: 0; top: calc(50% - 2px); border: 2px solid transparent; border-left: 3px solid #333; border-right: 0; }
.over { text-align: right; }
.total.over { font-size: 8px; }
.stack { display: flex; flex-direction: column; justify-content: center; height: 15px; overflow: hidden; line-height: 9px; }
.stack span { flex: none; }
.grid .head.more, .grid .total.more { padding: 0; }
.tall { height: 28px; line-height: 10px; }
.mid22 { height: 22px; }

.selection { position: absolute; left: 22px; top: 14px; width: 830px; height: 33px; border: solid #d3e6e4; border-width: 1px 2px 2px 0; }
.selection::after { content: ""; position: absolute; right: -3px; bottom: -3px; width: 4px; height: 4px; background: #555; }
.freeze-x { position: absolute; left: 40px; top: 14px; bottom: 0; width: 1px; background: #222; }
.freeze-y { position: absolute; left: 0; right: 0; top: 91px; height: 1px; background: #555; }

.chart { position: absolute; top: 260px; width: 340px; height: 261px; margin: 0; border: 1px solid #dededd; background: #fff; color: #000; font: 8px/12px Lato, sans-serif; }
.chart figcaption { position: absolute; left: 0; right: 0; top: 10px; text-align: center; font-size: 14px; line-height: 20px; font-weight: 700; }
.chart.bar { left: 373px; }
.chart.bar figcaption { left: 58px; text-align: left; white-space: nowrap; }
.bar svg { width: 100%; height: 100%; }
.bar text { fill: #222; }
.ticks, .cats { text-anchor: end; }
.bar .axis { text-anchor: middle; font-weight: 700; fill: #000; }
.chart.pie { left: 630px; }
.pie ul { position: absolute; right: 6px; top: 94px; margin: 0; padding: 0; list-style: none; width: 54px; white-space: nowrap; }
.pie li { display: flex; align-items: center; gap: 2px; height: 12px; color: #222; }
.pie li::before { content: ""; width: 5px; height: 5px; background: currentColor; flex: none; }
.k1::before { color: #4f81bd; } .k2::before { color: #c0504d; } .k3::before { color: #9bbb59; }
.k4::before { color: #8064a2; } .k5::before { color: #4bacc6; } .k6::before { color: #f79646; }

.vscroll { width: 9px; padding: 2px; background: #cecdcc; }
.vscroll span { display: block; width: 5px; height: 43%; border-radius: 3px; background: #7f7f7f; }
.hscroll { height: 10px; padding-right: 9px; flex: none; }
.track { height: 10px; padding: 2px; background: #cecdcc; }
.track span { display: block; width: 47%; height: 6px; border-radius: 3px; background: #7f7f7f; }

.tabs { display: flex; align-items: center; height: 16px; flex: none; }
.navs { padding: 0 7px 0 6px; }
.navs svg { width: 60px; height: 12px; }
.addtab { width: 19px; }
.addtab svg { width: 14px; height: 14px; margin: 0 auto; }
.tab { position: relative; height: 16px; padding: 0 7px; }
.tab:not(.active)::after { content: ""; position: absolute; right: 0; top: 4px; height: 9px; width: 1px; background: #c9c8c7; }
.tab.active { padding: 0 6px; border-bottom: 2px solid #8f8f8f; background: #fff; color: #222; font-weight: 700; }

.sidebar { position: relative; display: flex; flex-direction: column; align-items: center; width: 39px; padding-top: 7px; gap: 14px; border-left: 1px solid #cfcdcb; }
.sidebar button { width: 16px; height: 15px; }
.sidebar svg { width: 15px; height: 15px; }
.sidebar .fx { width: 18px; font-size: 16px; line-height: 14px; }
.handle { position: absolute; left: 0; top: 268px; width: 4px; height: 50px; display: flex; align-items: center; background: #8f8f8f; }
.sidebar .handle svg { width: 4px; height: 6px; }

.status { display: flex; align-items: center; height: 17px; border-top: 1px solid #cfcdcb; font-size: 8px; flex: none; }
.disk { padding: 0 9px 0 6px; }
.disk svg { width: 12px; height: 12px; }
.cell { height: 14px; line-height: 14px; border-right: 1px solid #dedddc; overflow: hidden; white-space: nowrap; }
.s1 { width: 153px; } .s2 { width: 222px; padding-left: 5px; } .s3 { width: 201px; padding-left: 6px; }
.s4 { width: 169px; text-align: center; } .s5 { width: 47px; }
.s6 { width: 30px; padding: 1px 0 0 6px; } .s6 svg { width: 20px; height: 12px; }
.s7 { width: 20px; } .s8 { flex: 1; text-align: center; }
.zoom { display: flex; align-items: center; width: 128px; padding-left: 4px; gap: 2px; }
.zoom button { width: 9px; } .zoom svg { width: 9px; height: 9px; }
.zoom input { appearance: none; width: 67px; height: 12px; margin: 0; background: linear-gradient(#999, #999) center / 100% 1px no-repeat; }
.zoom input::-webkit-slider-thumb { appearance: none; width: 4px; height: 8px; border: 1px solid #444; background: #fff; }
.pct { padding-left: 6px; }
```
